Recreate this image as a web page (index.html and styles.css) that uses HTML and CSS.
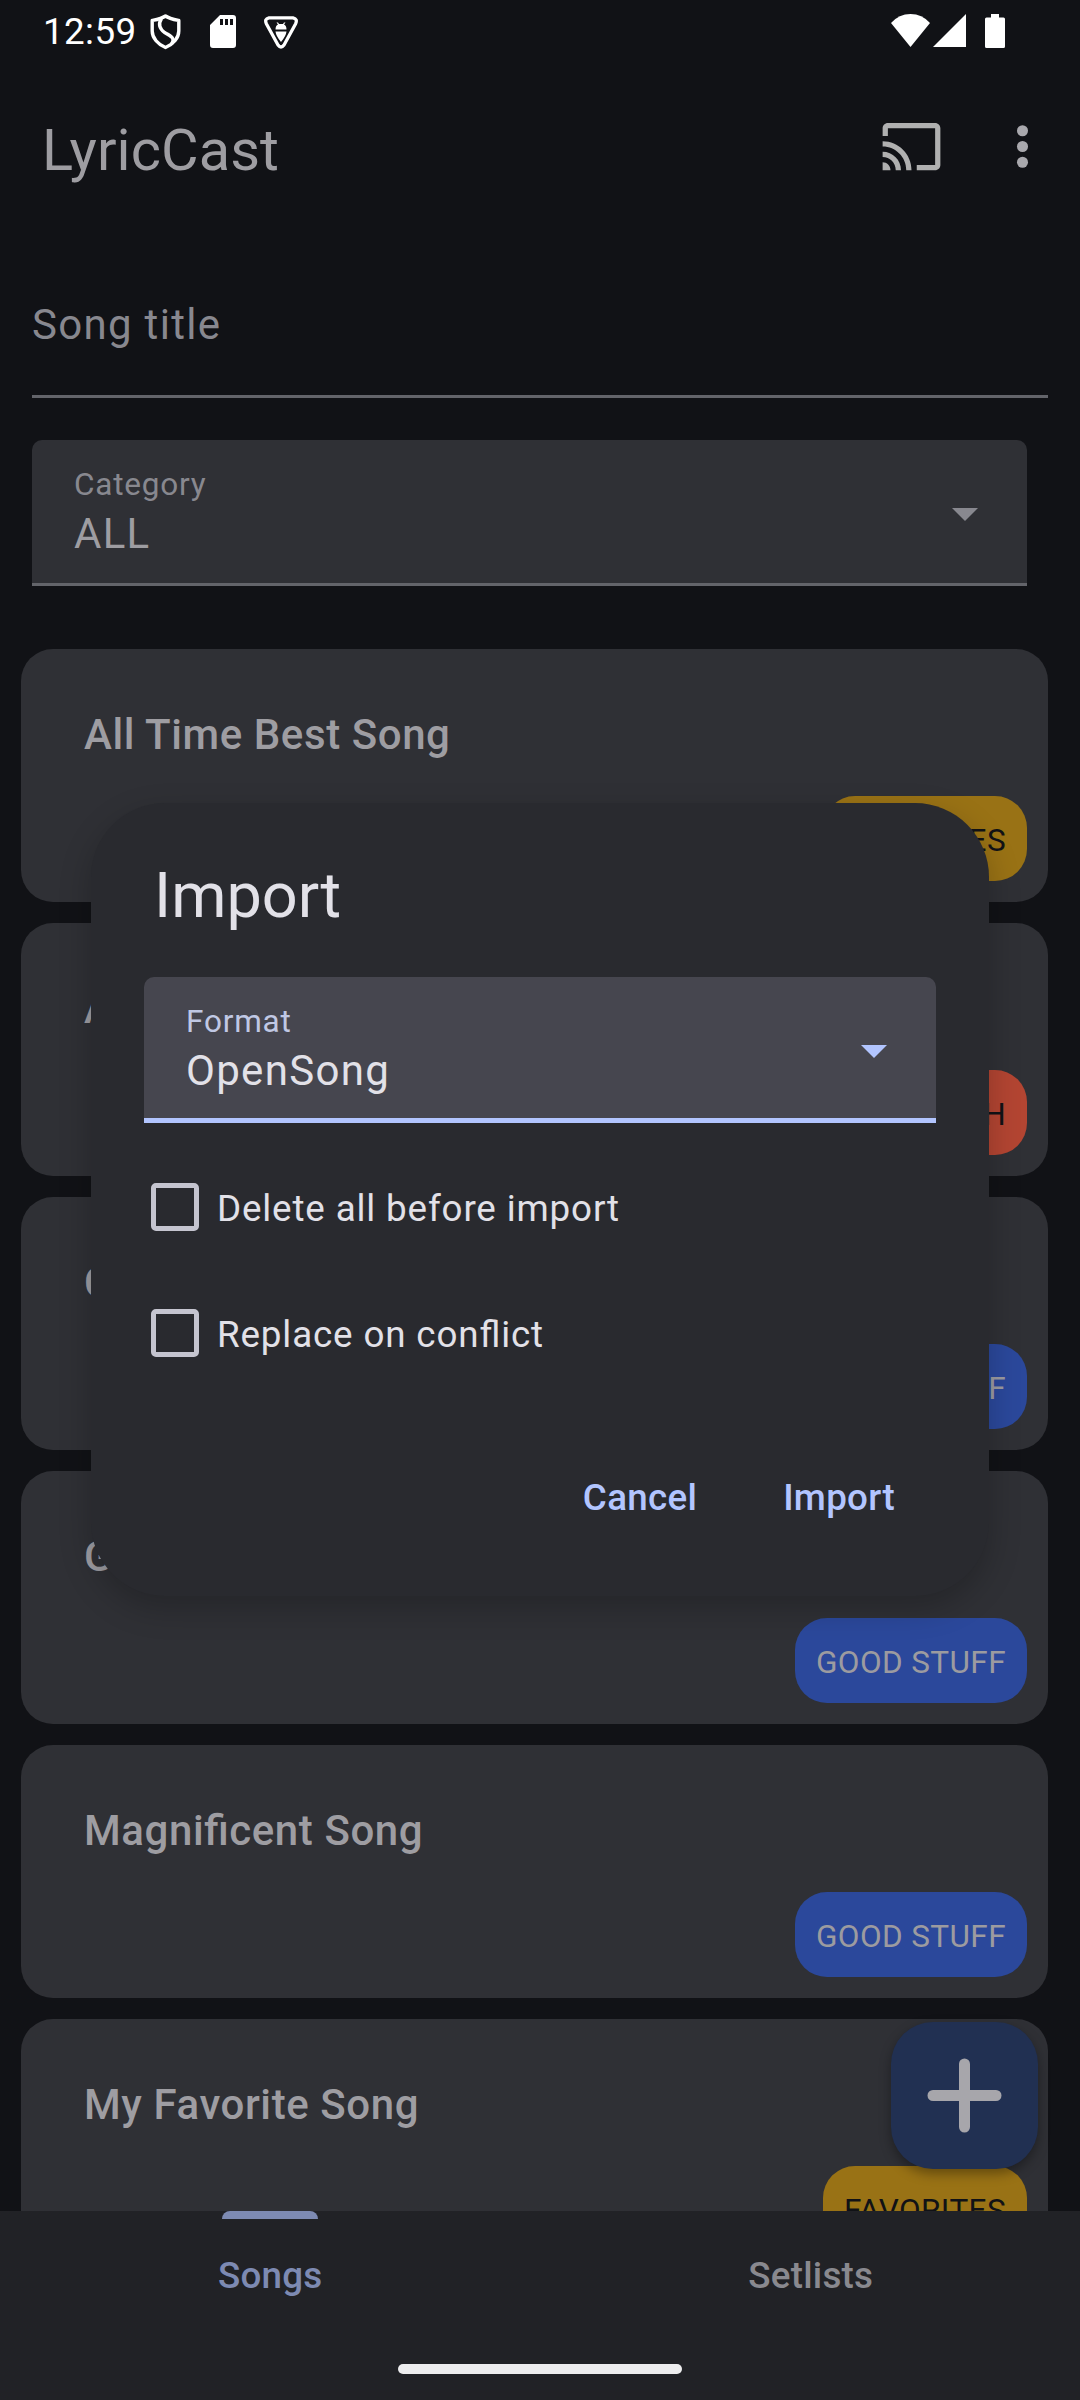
FILE: index.html
```html
<!DOCTYPE html>
<html lang="en">
<head>
<meta charset="utf-8">
<title>LyricCast</title>
<link rel="stylesheet" href="styles.css">
</head>
<body>
<div class="screen">
  <div class="status-bar">
    <span class="clock">12:59</span>
    <svg class="shield-icon" width="31" height="36" viewBox="0 0 31 36">
      <g fill="none" stroke="#fff" stroke-width="3.400" stroke-linejoin="round">
        <path d="M15.500 2 C12 4.500 7 5.500 2.200 6.500 V17 C2.200 24 8 30.500 15.500 33.500 C23 30.500 28.800 24 28.800 17 V6.500 C24 5.500 19 4.500 15.500 2Z"/>
        <path d="M11.500 4.500 C8 10 10 15 14.500 18.500 C20 21.500 26 24 21.500 30"/>
      </g>
    </svg>
    <svg class="sd-icon" width="26" height="33" viewBox="0 0 26 33">
      <path fill="#fff" fill-rule="evenodd" d="M10 0H23a3 3 0 0 1 3 3V30a3 3 0 0 1-3 3H3a3 3 0 0 1-3-3V10ZM10 4V10H13V4ZM15 4V10H18V4ZM20 4V10H23V4Z"/>
    </svg>
    <svg class="debug-icon" width="34" height="33" viewBox="0 0 34 33">
      <path fill="none" stroke="#fff" stroke-width="3.300" stroke-linejoin="round" d="M5 1.800H29Q34 3 31.500 8L20 29Q17 33 14 29L2.500 8Q0 3 5 1.800Z"/>
      <path fill="#fff" d="M11.500 13.500Q11.500 9.500 14 8.500L12.500 6.500H14L15 8H19L20 6.500H21.500L20 8.500Q22.500 9.500 22.500 13.500ZM11.500 15.500H22.500Q22 20 17 26Q12 20 11.500 15.500Z"/>
    </svg>
    <svg class="wifi-icon" width="39" height="33" viewBox="0 0 39 33"><path fill="#fff" d="M0 9Q8 0 19.500 0T39 9L19.500 33Z"/></svg>
    <svg class="signal-icon" width="33" height="33" viewBox="0 0 33 33"><path fill="#fff" d="M33 0V33H0Z"/></svg>
    <svg class="battery-icon" width="20" height="34" viewBox="0 0 20 34"><path fill="#fff" d="M6 0H14V3.500H18.500a1.500 1.500 0 0 1 1.500 1.500V32.500a1.500 1.500 0 0 1-1.500 1.500H1.500a1.500 1.500 0 0 1-1.500-1.500V5a1.500 1.500 0 0 1 1.500-1.500H6Z"/></svg>
  </div>

  <header class="toolbar">
    <h1 class="app-title">LyricCast</h1>
    <svg class="cast-icon" width="63" height="63" viewBox="0 0 24 24"><path fill="#b0b0b0" d="M21 3H3c-1.100 0-2 .9-2 2v3h2V5h18v14h-7v2h7c1.100 0 2-.9 2-2V5c0-1.100-.9-2-2-2zM1 18v3h3c0-1.660-1.340-3-3-3zm0-4v2c2.760 0 5 2.240 5 5h2c0-3.870-3.130-7-7-7zm0-4v2c4.970 0 9 4.030 9 9h2c0-6.080-4.930-11-11-11z"/></svg>
    <svg class="more-icon" width="63" height="63" viewBox="0 0 24 24" fill="#a9a8ad"><circle cx="12" cy="6" r="2.100"/><circle cx="12" cy="12" r="2.100"/><circle cx="12" cy="18" r="2.100"/></svg>
  </header>

  <div class="search-field">Song title</div>

  <div class="select category-select">
    <div class="select-text">
      <span class="select-label">Category</span>
      <span class="select-value">ALL</span>
    </div>
    <svg class="select-arrow" width="26" height="13" viewBox="0 0 26 13"><path fill="currentColor" d="M0 0H26L13 13Z"/></svg>
  </div>

  <main class="song-list">
    <article class="song"><h2 class="song-title">All Time Best Song</h2><span class="chip gold">FAVORITES</span></article>
    <article class="song"><h2 class="song-title">Amazing Song</h2><span class="chip red">CHURCH</span></article>
    <article class="song"><h2 class="song-title">Cool Song</h2><span class="chip blue">GOOD STUFF</span></article>
    <article class="song"><h2 class="song-title">Great Song</h2><span class="chip blue">GOOD STUFF</span></article>
    <article class="song"><h2 class="song-title">Magnificent Song</h2><span class="chip blue">GOOD STUFF</span></article>
    <article class="song"><h2 class="song-title">My Favorite Song</h2><span class="chip gold">FAVORITES</span></article>
    <div class="fab">
      <svg width="75" height="75" viewBox="0 0 75 75"><path fill="none" stroke="#a7a6ab" stroke-width="11" stroke-linecap="round" d="M37.500 6V69M6 37.500H69"/></svg>
    </div>
  </main>

  <nav class="bottom-nav">
    <div class="tabs">
      <span class="tab active">Songs</span>
      <span class="tab">Setlists</span>
    </div>
    <div class="home-handle"></div>
  </nav>

  <div class="dialog-layer">
    <section class="dialog">
      <h2 class="dialog-title">Import</h2>
      <div class="select format-select">
        <div class="select-text">
          <span class="select-label">Format</span>
          <span class="select-value">OpenSong</span>
        </div>
        <svg class="select-arrow" width="26" height="13" viewBox="0 0 26 13"><path fill="currentColor" d="M0 0H26L13 13Z"/></svg>
      </div>
      <div class="options">
        <div class="option"><span class="checkbox"></span><span class="option-label">Delete all before import</span></div>
        <div class="option"><span class="checkbox"></span><span class="option-label">Replace on conflict</span></div>
      </div>
      <div class="actions">
        <span class="action">Cancel</span>
        <span class="action">Import</span>
      </div>
    </section>
  </div>
</div>
</body>
</html>
```
FILE: styles.css
```css
* { box-sizing: border-box; }

body {
  margin: 0;
  background: #111216;
  font-family: Roboto, sans-serif;
  font-feature-settings: "liga" 1;
}

svg { display: block; flex: none; }
h1, h2 { margin: 0; font-weight: 400; }

.screen {
  position: relative;
  display: flex;
  flex-direction: column;
  width: 1080px;
  height: 2400px;
  overflow: hidden;
  white-space: nowrap;
}

/* status bar */
.status-bar {
  display: flex;
  align-items: flex-start;
  height: 63px;
  padding: 14px 75px 0 43px;
}
.clock {
  width: 107px;
  margin-top: -2px;
  color: #fff;
  font-size: 36.75px;
  letter-spacing: 0.4px;
  line-height: 40px;
}
.sd-icon { margin: 1px 0 0 29px; }
.debug-icon { margin: 2px 0 0 28px; }
.wifi-icon { margin-left: auto; }
.signal-icon { margin-left: 3px; }
.battery-icon { margin-left: 19px; }

/* toolbar */
.toolbar {
  display: flex;
  align-items: center;
  height: 166px;
  margin-bottom: 2px;
  padding: 0 26px 0 42px;
}
.app-title {
  flex: 1;
  padding-top: 7px;
  color: #9e9da2;
  font-size: 57.75px;
  letter-spacing: 0.1px;
}
.more-icon { margin-left: 48px; }

/* filters */
.search-field {
  height: 146px;
  margin: 21px 32px 0;
  padding-top: 2px;
  border-bottom: 3px solid #63646a;
  color: #88888f;
  font-size: 42px;
  letter-spacing: 1.3px;
  line-height: 141px;
}
.select {
  display: flex;
  justify-content: space-between;
  height: 146px;
  padding: 26px 49px 0 42px;
  border-radius: 10px 10px 0 0;
}
.select-text { display: flex; flex-direction: column; gap: 5px; }
.select-label { font-size: 31.5px; line-height: 38px; letter-spacing: 0.8px; }
.select-value { font-size: 42px; line-height: 50px; letter-spacing: 1.3px; }
.select-arrow { margin-top: 42px; }
.category-select {
  margin: 42px 53px 0 32px;
  border-bottom: 3px solid #63646a;
  background: #2f3035;
  color: #88888f;
}
.category-select .select-value { color: #9e9da2; }

/* songs */
.song-list {
  position: relative;
  display: flex;
  flex-direction: column;
  gap: 21px;
  height: 1625px;
  padding: 63px 32px 0 21px;
  overflow: hidden;
}
.song {
  display: flex;
  flex: none;
  flex-direction: column;
  justify-content: space-between;
  height: 253px;
  padding: 61px 21px 21px 63px;
  border-radius: 32px;
  background: #2f3035;
}
.song-title {
  color: #9e9da2;
  font-size: 42px;
  font-weight: 500;
  letter-spacing: 0.58px;
  line-height: 50px;
}
.chip {
  align-self: flex-end;
  height: 85px;
  padding: 3px 21px 0;
  border-radius: 32px;
  font-size: 31.5px;
  letter-spacing: 0.4px;
  line-height: 84px;
}
.gold { background: #997215; color: #111216; }
.red { background: #b34532; color: #111216; }
.blue { background: #2b489b; color: #9c9ba0; }

.fab {
  position: absolute;
  right: 42px;
  bottom: 42px;
  display: flex;
  align-items: center;
  justify-content: center;
  width: 147px;
  height: 147px;
  padding-bottom: 1px;
  border-radius: 42px;
  background: #213052;
  box-shadow: 0 5px 12px rgba(0, 0, 0, 0.35);
}

/* bottom navigation */
.bottom-nav {
  display: flex;
  flex: 1;
  flex-direction: column;
  align-items: center;
  background: #212226;
}
.tabs { display: flex; width: 100%; height: 153px; }
.tab {
  display: flex;
  flex: 1;
  flex-direction: column;
  align-items: center;
  padding: 43px 0 0 2px;
  color: #89898f;
  font-size: 36.75px;
  font-weight: 500;
  letter-spacing: 0.25px;
  line-height: 43px;
}
.active { padding-top: 0; padding-left: 1px; color: #7d8ab2; }
.active::before {
  width: 96px;
  height: 8px;
  margin-bottom: 35px;
  border-radius: 8px 8px 0 0;
  background: #7d8ab2;
  content: "";
}
.home-handle { width: 284px; height: 10px; border-radius: 5px; background: #ededee; }

/* import dialog */
.dialog-layer {
  position: absolute;
  inset: 0;
  display: flex;
  align-items: flex-start;
  justify-content: center;
  padding-top: 803px;
}
.dialog {
  display: flex;
  flex-direction: column;
  width: 898px;
  height: 793px;
  padding: 56px 53px 0;
  border-radius: 74px;
  background: #292a2f;
  box-shadow: 0 12px 32px rgba(0, 0, 0, 0.22);
}
.dialog-title {
  padding-left: 10px;
  color: #e2e1e8;
  font-size: 63px;
  line-height: 74px;
}
.format-select {
  margin-top: 44px;
  border-bottom: 5px solid #b2c5ff;
  background: #46464f;
  color: #b2c5ff;
}
.format-select .select-label { color: #c0c8e4; }
.format-select .select-value { color: #e2e1e8; }
.options { padding: 21px 0 0 7px; }
.option { display: flex; align-items: center; gap: 18px; height: 126px; }
.checkbox {
  width: 48px;
  height: 48px;
  border: 5px solid #c5c5d0;
  border-radius: 5px;
}
.option-label {
  padding-top: 2px;
  color: #e2e1e8;
  font-size: 36.75px;
  letter-spacing: 0.86px;
}
.actions {
  display: flex;
  justify-content: flex-end;
  gap: 86px;
  padding: 80px 41px 0 0;
}
.action {
  color: #b2c5ff;
  font-size: 36.75px;
  font-weight: 500;
  letter-spacing: 0.3px;
  line-height: 43px;
}
```
